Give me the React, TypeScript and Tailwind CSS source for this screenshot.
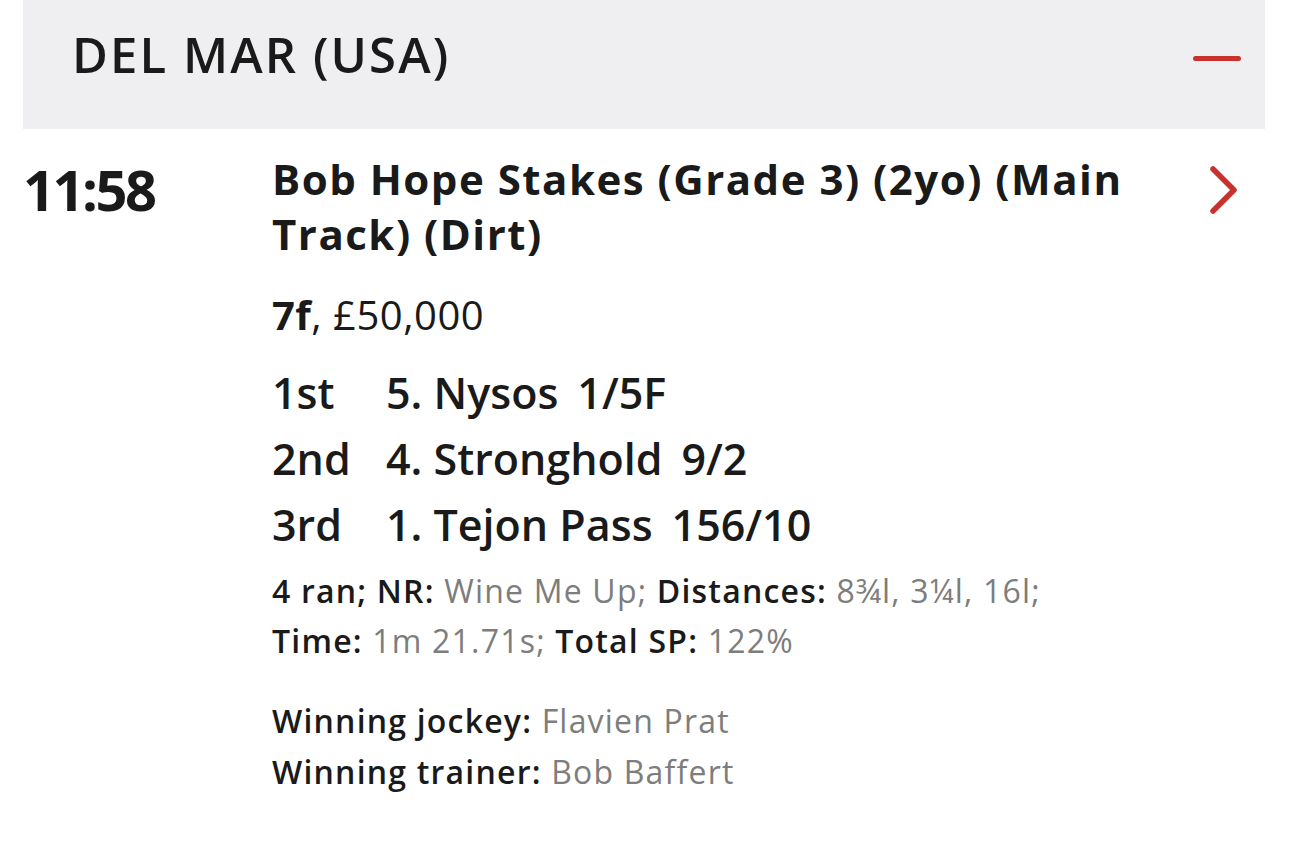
const RESULTS = [
  { pos: "1st", horse: "5. Nysos", odds: "1/5F" },
  { pos: "2nd", horse: "4. Stronghold", odds: "9/2" },
  { pos: "3rd", horse: "1. Tejon Pass", odds: "156/10" },
];

const FONT = "font-['Open_Sans','Liberation_Sans',sans-serif]";

export default function App() {
  return (
    <div className={`min-h-screen bg-white text-[#1a1a1a] ${FONT}`}>
      <div className="mx-[23px] mr-[24px] flex h-[129px] items-start justify-between bg-[#efeff1] pl-[49px] pr-[24px] pt-[24px]">
        <h1 className="text-[49px] font-semibold leading-[60px] tracking-[2.1px]">DEL MAR (USA)</h1>
        <div className="mt-[32px] h-[5px] w-[48px] rounded-full bg-[#c8322d]" />
      </div>

      <div className="flex pl-[23px] pr-[50px] pt-[22px]">
        <div className="mt-[7px] w-[249px] shrink-0 text-[56px] font-bold leading-[62px] tracking-[-2.5px]">11:58</div>

        <div className="flex-1">
          <div className="flex items-start justify-between">
            <h2 className="max-w-[900px] text-[42px] font-bold leading-[55px] tracking-[1.5px]">
              Bob Hope Stakes (Grade 3) (2yo) (Main Track) (Dirt)
            </h2>
            <svg width="30" height="48" viewBox="0 0 30 48" className="mt-[15px] shrink-0" fill="none">
              <path d="M4 3 L25 24 L4 45" stroke="#c8322d" strokeWidth="5.5" strokeLinecap="round" strokeLinejoin="round" />
            </svg>
          </div>

          <p className="mt-[32px] text-[40px] leading-[44px] tracking-[0.5px]">
            <span className="font-bold">7f</span>, £50,000
          </p>

          <div className="mt-[23px] flex flex-col">
            {RESULTS.map((r) => (
              <div key={r.pos} className="flex text-[43px] font-semibold leading-[66px]">
                <span className="w-[114px] shrink-0">{r.pos}</span>
                <span>{r.horse}</span>
                <span className="ml-[19px]">{r.odds}</span>
              </div>
            ))}
          </div>

          <div className="mt-[8px] text-[32px] font-semibold leading-[50px] tracking-[1.2px]">
            <p>
              4 ran; NR: <span className="font-normal text-[#7d7d7d]">Wine Me Up;</span> Distances:{" "}
              <span className="font-normal text-[#7d7d7d]">8¾l, 3¼l, 16l;</span>
            </p>
            <p>
              Time: <span className="font-normal text-[#7d7d7d]">1m 21.71s;</span> Total SP:{" "}
              <span className="font-normal text-[#7d7d7d]">122%</span>
            </p>
          </div>

          <div className="mt-[29px] text-[32px] font-semibold leading-[51px] tracking-[1.2px]">
            <p>
              Winning jockey: <span className="font-normal text-[#7d7d7d]">Flavien Prat</span>
            </p>
            <p>
              Winning trainer: <span className="font-normal text-[#7d7d7d]">Bob Baffert</span>
            </p>
          </div>
        </div>
      </div>
    </div>
  );
}
